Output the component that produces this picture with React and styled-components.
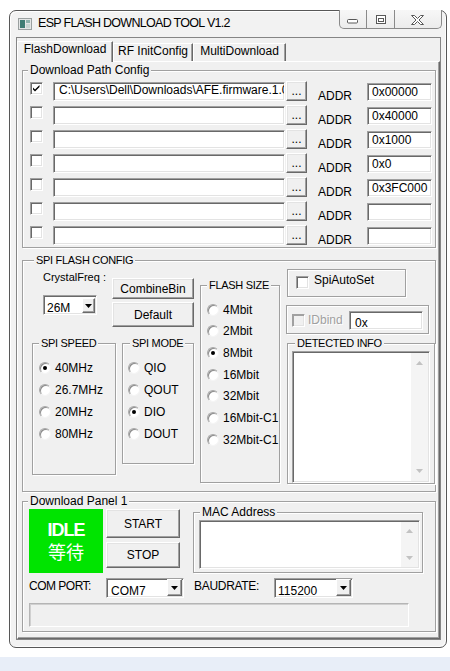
import React from 'react'
import styled, { createGlobalStyle } from 'styled-components'

const GlobalStyle = createGlobalStyle`
	html, body {
		margin: 0;
		padding: 0;
		background: #fff;
	}
	body {
		font-family: "Liberation Sans", Arial, sans-serif;
		font-size: 12px;
		color: #000;
	}
	*, *::before, *::after {
		box-sizing: border-box;
	}
`

// WINDOW FRAME
const Page = styled.div`
	width: 450px;
	height: 671px;
	display: flex;
	flex-direction: column;
	overflow: hidden;
	background: #fff;
`
const Window = styled.div`
	margin: 10px 0 0 9px;
	width: 438px;
	height: 638px;
	display: flex;
	flex-direction: column;
	background: #f2f2f2;
	border: 1px solid #575757;
	border-radius: 7px;
	box-shadow: inset 1px 1px 0 #fff, inset -1px -1px 0 #fcfcfc;
`
const Desktop = styled.div`
	margin-top: auto;
	height: 14px;
	background: #e8eef8;
`
const TitleBar = styled.div`
	height: 26px;
	display: flex;
	align-items: flex-start;
`
const AppIcon = styled.svg`
	flex: none;
	margin: 7px 0 0 8px;
`
const Title = styled.div`
	margin: 5px 0 0 6px;
	font-size: 12.5px;
	line-height: 15px;
	letter-spacing: -0.7px;
	white-space: nowrap;
`
const CaptionButtons = styled.div`
	margin: -1px 4px 0 auto;
	height: 19px;
	display: flex;
	border: 1px solid #8a8a8a;
	border-top: none;
	border-radius: 0 0 5px 5px;
	background: linear-gradient(#f7f7f7, #ececec);
	overflow: hidden;
`
const CapButton = styled.div`
	width: ${p => p.$w}px;
	height: 18px;
	border-left: ${p => (p.$first ? 'none' : '1px solid #8a8a8a')};
	svg {
		display: block;
	}
`
const Client = styled.div`
	flex: 1;
	margin: 0 5px 7px 6px;
	display: flex;
	flex-direction: column;
	background: #f0f0f0;
	border: 1px solid #858585;
`

// TABS
const TabStrip = styled.div`
	height: 23px;
	display: flex;
	align-items: flex-end;
	position: relative;
	z-index: 1;
`
const Tab = styled.div`
	width: ${p => p.$w}px;
	height: ${p => (p.$active ? 21 : 18)}px;
	margin-bottom: ${p => (p.$active ? -1 : 0)}px;
	background: #f0f0f0;
	border: 1px solid;
	border-color: #fff #696969 transparent #fff;
	border-bottom: none;
	box-shadow: inset -1px 0 0 #a0a0a0;
	text-align: center;
	line-height: 14px;
	white-space: nowrap;
`
const TabPanel = styled.div`
	flex: 1;
	display: flex;
	flex-direction: column;
	padding-left: 4px;
	border: 1px solid;
	border-color: #fff #696969 #696969 #fff;
	box-shadow: inset -1px -1px 0 #a0a0a0;
`

// GROUP BOXES
const GroupBox = styled.div`
	flex: none;
	width: ${p => p.$w}px;
	height: ${p => p.$h}px;
	margin-top: ${p => p.$mt || 0}px;
	margin-left: ${p => p.$ml || 0}px;
	display: flex;
	flex-direction: column;
	border: 1px solid #a0a0a0;
	box-shadow: inset 1px 1px 0 #fff, 1px 1px 0 #fff;
`
const Caption = styled.div`
	align-self: flex-start;
	margin: -8px 0 0 ${p => p.$x}px;
	padding: 0 2px;
	line-height: 15px;
	background: #f0f0f0;
	white-space: nowrap;
	font-size: ${p => (p.$small ? 11 : 12)}px;
	letter-spacing: ${p => (p.$small ? -0.3 : 0)}px;
`
const PlainBox = styled.div`
	flex: none;
	width: ${p => p.$w}px;
	height: ${p => p.$h}px;
	margin-top: ${p => p.$mt}px;
	margin-left: ${p => p.$ml || 0}px;
	display: flex;
	align-items: flex-start;
	padding-left: ${p => p.$pl}px;
	border: 1px solid #a0a0a0;
	box-shadow: inset 1px 1px 0 #fff, 1px 1px 0 #fff;
`

// CONTROLS
const Field = styled.div`
	flex: none;
	width: ${p => p.$w}px;
	height: ${p => p.$h}px;
	margin-top: ${p => p.$mt || 0}px;
	margin-left: ${p => p.$ml || 0}px;
	padding: ${p => p.$pt || 0}px 0 0 ${p => p.$pl || 4}px;
	background: #fff;
	border: 1px solid;
	border-color: #a0a0a0 #fff #fff #a0a0a0;
	box-shadow: inset 1px 1px 0 #696969, inset -1px -1px 0 #e3e3e3;
	line-height: 14px;
	white-space: nowrap;
	overflow: hidden;
	text-overflow: clip;
`
const Button = styled.div`
	flex: none;
	width: ${p => p.$w}px;
	height: ${p => p.$h}px;
	margin-top: ${p => p.$mt || 0}px;
	margin-left: ${p => p.$ml || 0}px;
	display: flex;
	align-items: center;
	justify-content: center;
	background: #f0f0f0;
	border: 1px solid;
	border-color: #fff #696969 #696969 #fff;
	box-shadow: inset -1px -1px 0 #a0a0a0, inset 1px 1px 0 #e3e3e3;
	white-space: nowrap;
`
const Check = styled.span`
	flex: none;
	width: 13px;
	height: 13px;
	margin-top: ${p => p.$mt || 0}px;
	margin-left: ${p => p.$ml || 0}px;
	background: ${p => (p.$disabled ? '#f0f0f0' : '#fff')};
	border: 1px solid;
	border-color: #a0a0a0 #fff #fff #a0a0a0;
	box-shadow: inset 1px 1px 0 ${p => (p.$disabled ? '#a0a0a0' : '#696969')}, inset -1px -1px 0 #e3e3e3;
	svg {
		display: block;
	}
`
const Radio = styled.span`
	flex: none;
	width: 12px;
	height: 12px;
	border-radius: 50%;
	background: #fff;
	border: 1px solid;
	border-color: #a8a8a8 #f4f4f4 #f4f4f4 #a8a8a8;
	box-shadow: inset 1px 1px 0 #8c8c8c;
	display: flex;
	align-items: center;
	justify-content: center;
	&::after {
		content: '';
		width: 4px;
		height: 4px;
		border-radius: 50%;
		background: ${p => (p.$on ? '#000' : 'transparent')};
	}
`
const RadioList = styled.div`
	display: flex;
	flex-direction: column;
	margin-top: 6px;
	padding-left: ${p => p.$pl}px;
`
const RadioRow = styled.div`
	height: ${p => p.$h}px;
	display: flex;
	align-items: center;
	gap: 4px;
	white-space: nowrap;
`
const ComboBox = styled.div`
	flex: none;
	width: ${p => p.$w}px;
	height: 20px;
	margin-top: ${p => p.$mt || 0}px;
	margin-left: ${p => p.$ml || 0}px;
	display: flex;
	align-items: flex-start;
	background: #fff;
	border: 1px solid;
	border-color: #a0a0a0 #fff #fff #a0a0a0;
	box-shadow: inset 1px 1px 0 #696969, inset -1px -1px 0 #e3e3e3;
`
const ComboText = styled.div`
	flex: 1;
	padding: 5px 0 0 ${p => p.$pl}px;
	line-height: 14px;
	white-space: nowrap;
`
const DropButton = styled.div`
	flex: none;
	width: ${p => p.$w}px;
	height: ${p => p.$h}px;
	margin: ${p => p.$mt}px 1px 0 0;
	display: flex;
	align-items: center;
	justify-content: center;
	background: #f0f0f0;
	border: 1px solid;
	border-color: #fff #696969 #696969 #fff;
	box-shadow: inset -1px -1px 0 #a0a0a0;
`
const TextArea = styled.div`
	flex: none;
	width: ${p => p.$w}px;
	height: ${p => p.$h}px;
	margin-left: ${p => p.$ml}px;
	display: flex;
	justify-content: flex-end;
	background: #fff;
	border: 1px solid;
	border-color: #a0a0a0 #fff #fff #a0a0a0;
	box-shadow: inset 1px 1px 0 #696969, inset -1px -1px 0 #e3e3e3;
`
const ScrollCol = styled.div`
	width: 17px;
	margin: 1px 1px 1px 0;
	display: flex;
	flex-direction: column;
	justify-content: space-between;
	align-items: center;
	padding: ${p => p.$pad}px 0;
	background: #f4f4f4;
`

// LAYOUT PIECES
const PathRows = styled.div`
	margin-top: 3px;
	display: flex;
	flex-direction: column;
	gap: 4px;
`
const PathRow = styled.div`
	height: 20px;
	display: flex;
	align-items: flex-start;
`
const AddrLabel = styled.div`
	flex: none;
	width: 49px;
	margin: 8px 0 0 11px;
	line-height: 14px;
`
const Row = styled.div`
	display: flex;
	align-items: flex-start;
	margin-top: ${p => p.$mt || 0}px;
	margin-left: ${p => p.$ml || 0}px;
`
const Column = styled.div`
	flex: none;
	display: flex;
	flex-direction: column;
	align-items: flex-start;
	width: ${p => (p.$w ? `${p.$w}px` : 'auto')};
	margin-left: ${p => p.$ml || 0}px;
`
const Label = styled.div`
	flex: none;
	margin-top: ${p => p.$mt || 0}px;
	margin-left: ${p => p.$ml || 0}px;
	width: ${p => (p.$w ? `${p.$w}px` : 'auto')};
	line-height: 14px;
	font-size: ${p => p.$size || 12}px;
	letter-spacing: ${p => p.$ls || 0}px;
	color: ${p => (p.$disabled ? '#a0a0a0' : '#000')};
	text-shadow: ${p => (p.$disabled ? '1px 1px 0 #fff' : 'none')};
	white-space: nowrap;
`
const Lamp = styled.div`
	flex: none;
	width: 74px;
	height: 64px;
	margin-left: 6px;
	display: flex;
	flex-direction: column;
	align-items: center;
	background: #00e400;
	color: #fff;
`
const LampText = styled.div`
	margin-top: 13px;
	height: 16px;
	font-size: 18px;
	line-height: 16px;
	font-weight: bold;
	letter-spacing: -1px;
`
const LampCjk = styled.div`
	height: 26px;
	font-family: "Noto Sans CJK SC", "Noto Sans CJK JP", sans-serif;
	font-size: 18px;
	line-height: 26px;
`
const StatusField = styled.div`
	width: 380px;
	height: 24px;
	margin: 5px 0 0 6px;
	border: 1px solid;
	border-color: #b5b5b5 #fff #fff #b5b5b5;
	box-shadow: 1px 1px 0 #d0d0d0 inset;
	background: #f0f0f0;
`

const CheckMark = () => (
	<svg width="11" height="11" viewBox="0 0 11 11">
		<path d="M2 4.5 L4 6.5 L8.5 2 L8.5 4 L4 8.5 L2 6.5 Z" fill="#000" />
	</svg>
)
const Arrow = () => (
	<svg width="7" height="4" viewBox="0 0 7 4">
		<path d="M0 0 H7 L3.5 4 Z" fill="#000" />
	</svg>
)
const ScrollArrow = ({ up }) => (
	<svg width="7" height="4" viewBox="0 0 7 4">
		<path d={up ? 'M0 4 H7 L3.5 0 Z' : 'M0 0 H7 L3.5 4 Z'} fill="#c2c2c2" />
	</svg>
)

const PATHS = [
	{ on: true, path: 'C:\\Users\\Dell\\Downloads\\AFE.firmware.1.0', addr: '0x00000' },
	{ path: '', addr: '0x40000' },
	{ path: '', addr: '0x1000' },
	{ path: '', addr: '0x0' },
	{ path: '', addr: '0x3FC000' },
	{ path: '', addr: '' },
	{ path: '', addr: '' },
]
const SPEEDS = ['40MHz', '26.7MHz', '20MHz', '80MHz']
const MODES = ['QIO', 'QOUT', 'DIO', 'DOUT']
const SIZES = ['4Mbit', '2Mbit', '8Mbit', '16Mbit', '32Mbit', '16Mbit-C1', '32Mbit-C1']

const Combo = ({ w, ml, mt, text, pl, bw, bh, bt }) => (
	<ComboBox $w={w} $ml={ml} $mt={mt}>
		<ComboText $pl={pl}>{text}</ComboText>
		<DropButton $w={bw} $h={bh} $mt={bt}>
			<Arrow />
		</DropButton>
	</ComboBox>
)

export default function App() {
	return (
		<Page>
			<GlobalStyle />
			<Window>
				<TitleBar>
					<AppIcon width="14" height="12" viewBox="0 0 14 12">
						<rect x="0.5" y="0.5" width="13" height="11" fill="#e4e6e6" stroke="#9aa0a0" />
						<rect x="2" y="2" width="5" height="8" fill="#3f7d74" />
						<rect x="8" y="2" width="4" height="3" fill="#8fb3ad" />
						<rect x="8" y="6" width="4" height="4" fill="#c9d6d3" />
					</AppIcon>
					<Title>ESP FLASH DOWNLOAD TOOL V1.2</Title>
					<CaptionButtons>
						<CapButton $w={26} $first>
							<svg width="26" height="18" viewBox="0 0 26 18">
								<rect x="7.5" y="9.5" width="10" height="3.5" rx="1" fill="#fff" stroke="#585858" />
							</svg>
						</CapButton>
						<CapButton $w={28}>
							<svg width="27" height="18" viewBox="0 0 27 18">
								<rect x="9.5" y="5.5" width="9" height="8" fill="#fff" stroke="#585858" />
								<rect x="11.5" y="8.5" width="5" height="3" fill="#fff" stroke="#585858" />
							</svg>
						</CapButton>
						<CapButton $w={47}>
							<svg width="46" height="18" viewBox="0 0 46 18">
								<path
									d="M16.5 5.5 h3 l3 3 l3 -3 h3 l-4.5 4.5 l4.5 4.5 h-3 l-3 -3 l-3 3 h-3 l4.5 -4.5 z"
									fill="#fff"
									stroke="#585858"
								/>
							</svg>
						</CapButton>
					</CaptionButtons>
				</TitleBar>
				<Client>
					<TabStrip>
						<Tab $w={96} $active>FlashDownload</Tab>
						<Tab $w={80}>RF InitConfig</Tab>
						<Tab $w={93}>MultiDownload</Tab>
					</TabStrip>
					<TabPanel>
						<GroupBox $w={414} $h={178} $mt={8}>
							<Caption $x={5}>Download Path Config</Caption>
							<PathRows>
								{PATHS.map((p, i) => (
									<PathRow key={i}>
										<Check $ml={7} $mt={1}>{p.on && <CheckMark />}</Check>
										<Field $w={232} $h={19} $mt={1} $ml={10} $pl={5}>{p.path}</Field>
										<Button $w={21} $h={20} $ml={1}>...</Button>
										<AddrLabel>ADDR</AddrLabel>
										<Field $w={65} $h={18} $mt={2} $pl={4} $pt={1}>{p.addr}</Field>
									</PathRow>
								))}
							</PathRows>
						</GroupBox>

						<GroupBox $w={414} $h={232} $mt={12}>
							<Caption $x={11} $small>SPI FLASH CONFIG</Caption>
							<Row>
								<Column $ml={9}>
									<Row>
										<Column $w={69} $ml={11}>
											<Label $mt={2} $size={11}>CrystalFreq :</Label>
											<Combo w={54} mt={11} text="26M" pl={3} bw={13} bh={15} bt={2} />
										</Column>
										<Column>
											<Button $w={82} $h={21} $mt={10}>CombineBin</Button>
											<Button $w={82} $h={25} $mt={3}>Default</Button>
										</Column>
									</Row>
									<Row $mt={16}>
										<GroupBox $w={84} $h={132}>
											<Caption $x={6} $small>SPI SPEED</Caption>
											<RadioList $pl={6}>
												{SPEEDS.map((s, i) => (
													<RadioRow key={s} $h={22}>
														<Radio $on={i === 0} />
														{s}
													</RadioRow>
												))}
											</RadioList>
										</GroupBox>
										<GroupBox $w={72} $h={121} $ml={6}>
											<Caption $x={7} $small>SPI MODE</Caption>
											<RadioList $pl={5}>
												{MODES.map((s, i) => (
													<RadioRow key={s} $h={22}>
														<Radio $on={i === 2} />
														{s}
													</RadioRow>
												))}
											</RadioList>
										</GroupBox>
									</Row>
								</Column>
								<GroupBox $w={80} $h={198} $mt={17} $ml={6}>
									<Caption $x={6} $small>FLASH SIZE</Caption>
									<RadioList $pl={6}>
										{SIZES.map((s, i) => (
											<RadioRow key={s} $h={21.67}>
												<Radio $on={i === 2} />
												{s}
											</RadioRow>
										))}
									</RadioList>
								</GroupBox>
								<Column $ml={7}>
									<PlainBox $w={119} $h={28} $mt={1} $pl={8}>
										<Check $mt={6}>{null}</Check>
										<Label $mt={3} $ml={5}>SpiAutoSet</Label>
									</PlainBox>
									<PlainBox $w={143} $h={29} $mt={8} $ml={-1} $pl={5}>
										<Check $mt={8} $disabled>{null}</Check>
										<Label $mt={7} $ml={3} $w={41} $disabled>IDbind</Label>
										<Field $w={74} $h={19} $mt={5} $pl={5} $pt={4}>0x</Field>
									</PlainBox>
									<GroupBox $w={148} $h={141} $mt={9}>
										<Caption $x={7} $small>DETECTED INFO</Caption>
										<TextArea $w={138} $h={132} $ml={4}>
											<ScrollCol $pad={8}>
												<ScrollArrow up />
												<ScrollArrow />
											</ScrollCol>
										</TextArea>
									</GroupBox>
								</Column>
							</Row>
						</GroupBox>

						<GroupBox $w={414} $h={131} $mt={9}>
							<Caption $x={5}>Download Panel 1</Caption>
							<Row>
								<Lamp>
									<LampText>IDLE</LampText>
									<LampCjk>等待</LampCjk>
								</Lamp>
								<Column $ml={3}>
									<Button $w={74} $h={29}>START</Button>
									<Button $w={74} $h={26} $mt={4}>STOP</Button>
								</Column>
								<GroupBox $w={230} $h={61} $mt={3} $ml={13}>
									<Caption $x={6}>MAC Address</Caption>
									<TextArea $w={221} $h={49} $ml={5}>
										<ScrollCol $pad={7}>
											<ScrollArrow up />
											<ScrollArrow />
										</ScrollCol>
									</TextArea>
								</GroupBox>
							</Row>
							<Row $mt={5}>
								<Label $ml={6} $mt={1} $w={77} $ls={-0.5}>COM PORT:</Label>
								<Combo w={78} text="COM7" pl={4} bw={15} bh={17} bt={0} />
								<Label $ml={10} $mt={1} $w={80} $ls={-0.3}>BAUDRATE:</Label>
								<Combo w={79} text="115200" pl={3} bw={15} bh={17} bt={0} />
							</Row>
							<StatusField />
						</GroupBox>
					</TabPanel>
				</Client>
			</Window>
			<Desktop />
		</Page>
	)
}
